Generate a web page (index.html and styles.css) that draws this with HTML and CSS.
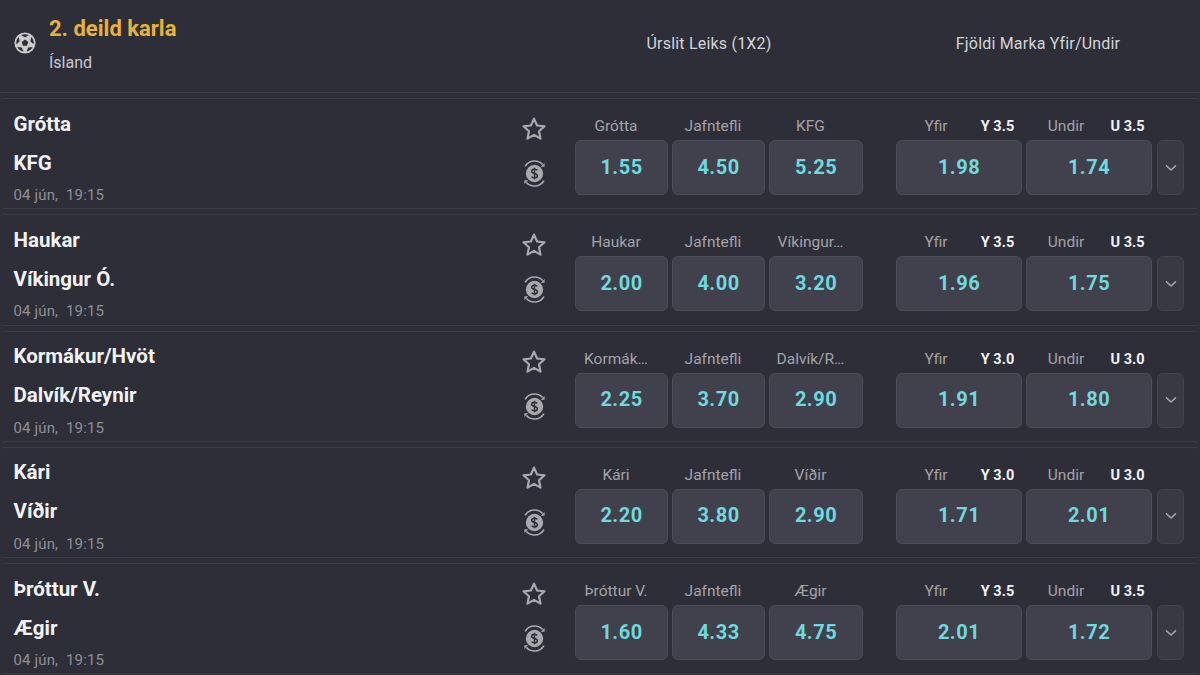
FILE: index.html
```html
<!DOCTYPE html>
<html lang="is">
<head>
  <meta charset="UTF-8">
  <meta name="viewport" content="width=device-width, initial-scale=1.0">
  <title>2. deild karla</title>
  <link rel="stylesheet" href="styles.css">
</head>
<body>
  <svg class="sprites" width="0" height="0">
    <symbol id="star" viewBox="0 0 26 26">
      <path d="M13 2.600l3.100 6.900 7.400.8-5.500 5 1.500 7.300L13 18.900l-6.500 3.700L8 15.300l-5.500-5 7.400-.8z" fill="none" stroke="currentColor" stroke-width="2.200" stroke-linejoin="round"/>
    </symbol>
    <symbol id="cash" viewBox="0 0 26 30">
      <circle cx="13" cy="15" r="9" fill="currentColor"/>
      <path d="M3.200 7.600C5.400 3.900 9 2 13 2c3.400 0 6.300 1.300 8.400 3.600" fill="none" stroke="currentColor" stroke-width="1.800"/>
      <path d="M22.800 22.400C20.600 26.100 17 28 13 28c-3.400 0-6.300-1.300-8.400-3.600" fill="none" stroke="currentColor" stroke-width="1.800"/>
      <path d="M23.500 4v4h-4zM2.500 26v-4h4z" fill="currentColor"/>
      <path d="M16 11.800c-.6-.9-1.700-1.300-3-1.300-1.700 0-3 .8-3 2.200 0 3 6 1.600 6 4.600 0 1.400-1.300 2.200-3 2.200-1.300 0-2.400-.4-3-1.300M13 8.900v12.200" fill="none" stroke="#2d2e38" stroke-width="1.500"/>
    </symbol>
    <symbol id="chevron" viewBox="0 0 12 8">
      <path d="M1.500 1.800L6 6l4.500-4.200" fill="none" stroke="currentColor" stroke-width="1.600" stroke-linecap="round" stroke-linejoin="round"/>
    </symbol>
    <path id="patch" d="M7.800 3.500L12 5.800l4.200-2.300Q12 1.300 7.800 3.500z" fill="#2d2e38"/>
  </svg>

  <header class="league">
    <svg class="ball" viewBox="0 0 24 24">
      <circle cx="12" cy="12" r="11.500" fill="#cbcbce"/>
      <path d="M12 8.300l3.600 2.600-1.400 4.200H9.800l-1.400-4.200z" fill="#2d2e38"/>
      <use href="#patch"/>
      <use href="#patch" transform="rotate(72 12 12)"/>
      <use href="#patch" transform="rotate(144 12 12)"/>
      <use href="#patch" transform="rotate(216 12 12)"/>
      <use href="#patch" transform="rotate(288 12 12)"/>
    </svg>
    <div class="league-name">
      <h1>2. deild karla</h1>
      <p>Ísland</p>
    </div>
    <div class="market-title market-title-1x2">Úrslit Leiks (1X2)</div>
    <div class="market-title market-title-ou">Fjöldi Marka Yfir/Undir</div>
  </header>

  <main class="matches" id="matches"></main>

  <script>
    const matches = [
      { home: 'Grótta', away: 'KFG', labels: ['Grótta', 'Jafntefli', 'KFG'], odds: ['1.55', '4.50', '5.25'], line: '3.5', ou: ['1.98', '1.74'] },
      { home: 'Haukar', away: 'Víkingur Ó.', labels: ['Haukar', 'Jafntefli', 'Víkingur…'], odds: ['2.00', '4.00', '3.20'], line: '3.5', ou: ['1.96', '1.75'] },
      { home: 'Kormákur/Hvöt', away: 'Dalvík/Reynir', labels: ['Kormák…', 'Jafntefli', 'Dalvík/R…'], odds: ['2.25', '3.70', '2.90'], line: '3.0', ou: ['1.91', '1.80'] },
      { home: 'Kári', away: 'Víðir', labels: ['Kári', 'Jafntefli', 'Víðir'], odds: ['2.20', '3.80', '2.90'], line: '3.0', ou: ['1.71', '2.01'] },
      { home: 'Þróttur V.', away: 'Ægir', labels: ['Þróttur V.', 'Jafntefli', 'Ægir'], odds: ['1.60', '4.33', '4.75'], line: '3.5', ou: ['2.01', '1.72'] }
    ];

    const list = document.getElementById('matches');

    matches.forEach(m => {
      const row = document.createElement('article');
      row.className = 'match';
      row.innerHTML = `
        <div class="teams">
          <div class="team">${m.home}</div>
          <div class="team">${m.away}</div>
          <div class="kickoff">04 jún,&nbsp; 19:15</div>
        </div>
        <div class="actions">
          <svg class="star"><use href="#star"/></svg>
          <svg class="cash"><use href="#cash"/></svg>
        </div>
        <div class="market market-1x2">
          ${m.labels.map((l, i) => `
            <div class="outcome">
              <div class="outcome-label"><span>${l}</span></div>
              <button class="odd">${m.odds[i]}</button>
            </div>`).join('')}
        </div>
        <div class="market market-ou">
          <div class="outcome">
            <div class="outcome-label split"><span>Yfir</span><b>Y ${m.line}</b></div>
            <button class="odd">${m.ou[0]}</button>
          </div>
          <div class="outcome">
            <div class="outcome-label split"><span>Undir</span><b>U ${m.line}</b></div>
            <button class="odd">${m.ou[1]}</button>
          </div>
        </div>
        <button class="more"><svg><use href="#chevron"/></svg></button>
      `;
      list.appendChild(row);
    });
  </script>
</body>
</html>
```

FILE: styles.css
```css
* {
  box-sizing: border-box;
}

body {
  margin: 0;
  height: 675px;
  overflow: hidden;
  font-family: 'Roboto', sans-serif;
  background-color: #2d2e38;
  color: #f2f2f4;
}

.sprites {
  display: block;
  height: 0;
}

.league {
  height: 93px;
  display: flex;
  align-items: flex-start;
  padding-left: 14px;
  border-bottom: 1px solid #3c3d47;
}

.ball {
  width: 22px;
  height: 22px;
  margin-top: 32px;
  flex: none;
}

.league-name {
  width: 500px;
  margin-left: 13px;
  padding-top: 17px;
}

.league-name h1 {
  margin: 0;
  font-size: 22px;
  line-height: 24px;
  font-weight: 700;
  color: #e9b23a;
}

.league-name p {
  margin: 12px 0 0;
  font-size: 16px;
  line-height: 20px;
  color: #c9c9cc;
}

.market-title {
  font-size: 16px;
  line-height: 20px;
  letter-spacing: 0.2px;
  margin-top: 34px;
  text-align: center;
  white-space: nowrap;
  color: #d4d4d8;
}

.market-title-1x2 {
  width: 288px;
  margin-left: 16px;
}

.market-title-ou {
  width: 256px;
  margin-left: 57px;
}

.matches {
  display: flex;
  flex-direction: column;
  gap: 5px;
  padding-top: 5px;
}

.match {
  height: 111.25px;
  flex: none;
  display: flex;
  align-items: flex-start;
  padding: 0 16px 0 13.5px;
  border-top: 1px solid #3a3b45;
  border-bottom: 1px solid #3a3b45;
  border-radius: 3px;
}

.teams {
  width: 492.5px;
  flex: none;
  padding-top: 12.5px;
}

.team {
  font-size: 20.5px;
  line-height: 24px;
  font-weight: 700;
  margin-bottom: 15px;
  white-space: nowrap;
}

.kickoff {
  font-size: 15px;
  line-height: 18px;
  letter-spacing: 0.15px;
  margin-top: -3.5px;
  color: #8f9096;
}

.actions {
  width: 56px;
  flex: none;
  display: flex;
  flex-direction: column;
  align-items: center;
  padding-top: 17px;
  color: #a9a9ad;
}

.star {
  width: 26px;
  height: 26px;
}

.cash {
  width: 25px;
  height: 29px;
  margin-top: 17px;
}

.market {
  display: grid;
  gap: 4px;
  flex: none;
}

.market-1x2 {
  grid-template-columns: 93px 93px 94px;
  margin-left: 13px;
}

.market-ou {
  grid-template-columns: 126px 126px;
  margin-left: 33px;
}

.outcome {
  min-width: 0;
}

.outcome-label {
  height: 41px;
  padding: 17px 17px 0 6px;
  font-size: 15.5px;
  line-height: 20px;
  text-align: center;
  white-space: nowrap;
  color: #a3a3a8;
}

.outcome-label.split {
  display: grid;
  grid-template-columns: 80px 43px;
  align-items: baseline;
  padding: 17px 0 0;
}

.outcome-label b {
  font-size: 14.5px;
  font-weight: 700;
  color: #f2f2f4;
}

.odd,
.more {
  display: block;
  height: 55px;
  padding: 0;
  background: #40414d;
  border: 1px solid #4b4c58;
  border-radius: 6px;
  font-family: inherit;
}

.odd {
  width: 100%;
  padding-bottom: 2px;
  font-size: 20px;
  font-weight: 700;
  letter-spacing: 0.5px;
  color: #6fd9de;
}

.more {
  width: 27px;
  margin: 41px 0 0 5px;
  flex: none;
  background: #383943;
  border-color: #41424c;
  color: #a3a3a8;
}

.more svg {
  display: block;
  width: 12px;
  height: 8px;
  margin: auto;
}
```
